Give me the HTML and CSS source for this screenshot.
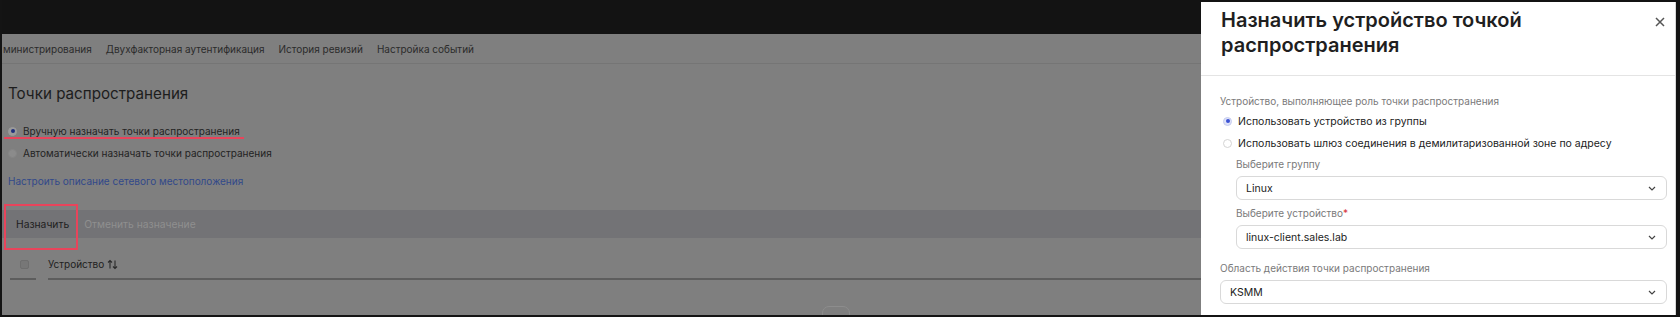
FILE: index.html
```html
<!DOCTYPE html>
<html lang="ru">
<head>
<meta charset="utf-8">
<title>Точки распространения</title>
<link rel="stylesheet" href="styles.css">
</head>
<body>
<div class="screen">
  <div class="app">
    <header class="topbar"></header>
    <nav class="tabs">
      <span class="tab">министрирования</span>
      <span class="tab">Двухфакторная аутентификация</span>
      <span class="tab">История ревизий</span>
      <span class="tab">Настройка событий</span>
    </nav>
    <main class="content">
      <h1 class="page-title">Точки распространения</h1>
      <div class="radio-group">
        <label class="radio marked"><span class="dot checked"></span>Вручную назначать точки распространения</label>
        <label class="radio"><span class="dot"></span>Автоматически назначать точки распространения</label>
      </div>
      <a class="link" href="#">Настроить описание сетевого местоположения</a>
      <div class="toolbar">
        <button class="tbtn boxed">Назначить</button>
        <button class="tbtn disabled">Отменить назначение</button>
      </div>
      <div class="thead">
        <div class="th th-check"><span class="checkbox"></span></div>
        <div class="th th-name">Устройство
          <svg class="sort" width="11" height="11" viewBox="0 0 11 11"><path d="M3 9.5V1.5M1 3.5l2-2 2 2M8 1.5v8M6 7.5l2 2 2-2" fill="none" stroke="#2a2a2a" stroke-width="1.1"/></svg>
        </div>
      </div>
      <div class="pager-stub"></div>
    </main>
  </div>

  <aside class="drawer">
    <div class="drawer-head">
      <h2 class="drawer-title">Назначить устройство точкой распространения</h2>
      <button class="close" aria-label="Закрыть">
        <svg width="10" height="10" viewBox="0 0 10 10"><path d="M1 1l8 8M9 1l-8 8" stroke="#555" stroke-width="1.5" fill="none"/></svg>
      </button>
    </div>
    <div class="drawer-body">
      <div class="field-label first">Устройство, выполняющее роль точки распространения</div>
      <label class="d-radio"><span class="d-dot checked"></span>Использовать устройство из группы</label>
      <label class="d-radio"><span class="d-dot"></span>Использовать шлюз соединения в демилитаризованной зоне по адресу</label>
      <div class="nested">
        <div class="field-label small-gap">Выберите группу</div>
        <div class="select"><span>Linux</span><svg class="chev" width="8" height="5" viewBox="0 0 8 5"><path d="M1 1l3 3 3-3" fill="none" stroke="#444" stroke-width="1.2"/></svg></div>
        <div class="field-label">Выберите устройство<span class="req">*</span></div>
        <div class="select"><span>linux-client.sales.lab</span><svg class="chev" width="8" height="5" viewBox="0 0 8 5"><path d="M1 1l3 3 3-3" fill="none" stroke="#444" stroke-width="1.2"/></svg></div>
      </div>
      <div class="field-label scope">Область действия точки распространения</div>
      <div class="select"><span>KSMM</span><svg class="chev" width="8" height="5" viewBox="0 0 8 5"><path d="M1 1l3 3 3-3" fill="none" stroke="#444" stroke-width="1.2"/></svg></div>
    </div>
  </aside>
</div>
</body>
</html>
```

FILE: styles.css
```css
* { box-sizing: border-box; }
html, body { margin: 0; padding: 0; }
body {
  background: #141414;
  font-family: Inter, "Noto Sans", sans-serif;
  width: 1680px;
  height: 317px;
  overflow: hidden;
}
.screen {
  position: relative;
  margin: 0 4px 0 2px;
  height: 315px;
  overflow: hidden;
  background: #7f7f7f;
}
.app { display: flex; flex-direction: column; height: 100%; }
.app > * { flex-shrink: 0; }
.topbar { height: 34px; background: #131313; }
.tabs {
  height: 30px;
  display: flex;
  align-items: center;
  gap: 14px;
  border-bottom: 1px solid #757575;
  font-size: 10px;
  color: #2b2b2b;
  padding: 1px 0 0 1px;
}
.content { padding-left: 6px; display: flex; flex-direction: column; align-items: flex-start; }
.page-title {
  margin: 18px 0 0;
  font-size: 15.2px;
  line-height: 24px;
  font-weight: 400;
  color: #1d1d1d;
}
.radio-group { margin-top: 14px; display: flex; flex-direction: column; }
.radio {
  position: relative;
  height: 22px;
  display: flex;
  align-items: center;
  gap: 6px;
  font-size: 10px;
  color: #232323;
}
.dot {
  width: 9px; height: 9px; border-radius: 50%;
  background: #8b8b8b;
  border: 1px solid #858585;
  position: relative;
}
.dot.checked { background: #9a9a9a; border-color: #9a9a9a; }
.dot.checked::after {
  content: ""; position: absolute; left: 1.5px; top: 1.5px;
  width: 4px; height: 4px; border-radius: 50%; background: #1f2f7c;
}
.radio.marked::after {
  content: ""; position: absolute; left: -4px; top: 17px;
  width: 240px; height: 2px; background: #e8445b;
}
.link {
  margin-top: 10px;
  font-size: 10px;
  line-height: 14px;
  color: #32498a;
  text-decoration: none;
}
.toolbar {
  margin: 22px 0 0 -6px;
  align-self: stretch;
  height: 28px;
  background: #737376;
  display: flex;
  align-items: center;
}
.tbtn {
  position: relative;
  font-family: inherit;
  font-size: 10.3px;
  background: none;
  border: 0;
  padding: 0 6px 0 14px;
  color: #1e1e1e;
  height: 28px;
}
.tbtn.disabled { color: #8f8f8f; padding-left: 9px; }
.tbtn.boxed::after {
  content: ""; position: absolute; left: 2px; top: -6px;
  width: 70px; height: 42px;
  border: 2px solid #e8445b;
}
.thead {
  display: flex;
  align-self: stretch;
  gap: 12px;
  height: 42px;
  padding-left: 2px;
}
.th {
  display: flex;
  align-items: center;
  padding-top: 12px;
  border-bottom: 2px solid #5d5d5d;
}
.th-check { width: 26px; justify-content: center; padding-left: 2px; }
.checkbox {
  width: 9px; height: 9px; border-radius: 2px;
  background: #777; border: 1px solid #6e6e6e;
}
.th-name { flex: 1; font-size: 10px; color: #1e1e1e; gap: 3px; }
.sort { display: block; }
.pager-stub {
  margin: 26px 0 0 814px;
  width: 28px; height: 18px;
  border: 1px solid #8d8d8d;
  border-radius: 7px 7px 0 0;
}

/* Drawer */
.drawer {
  position: absolute;
  top: 2px;
  left: 1199px;
  width: 475px;
  height: 313px;
  background: #fff;
  border-right: 1px solid #d8d8d8;
  display: flex;
  flex-direction: column;
}
.drawer-head {
  height: 74px;
  flex-shrink: 0;
  border-bottom: 1px solid #e4e4e4;
  display: flex;
  justify-content: space-between;
  align-items: flex-start;
  padding: 6px 10px 0 20px;
}
.drawer-title {
  margin: 0;
  font-size: 20px;
  line-height: 25px;
  font-weight: 600;
  color: #1f1f1f;
  width: 330px;
}
.close {
  border: 0; background: none; padding: 0;
  margin-top: 9px;
  width: 10px; height: 10px;
  display: flex;
}
.drawer-body {
  padding: 18px 8px 0 19px;
  display: flex;
  flex-direction: column;
}
.field-label {
  font-size: 10px;
  line-height: 14px;
  color: #7a7a7a;
  margin-bottom: 5px;
}
.field-label.first { margin-bottom: 2px; }
.field-label.small-gap { margin-top: 3px; }
.req { color: #d6333a; }
.d-radio {
  height: 22px;
  display: flex;
  align-items: center;
  gap: 6px;
  padding-left: 3px;
  font-size: 10.5px;
  color: #222;
}
.d-dot {
  width: 9px; height: 9px; border-radius: 50%;
  border: 1px solid #d4d4d4;
  background: #fff;
  position: relative;
}
.d-dot.checked { border-color: #c6ccef; background: #dfe3f8; }
.d-dot.checked::after {
  content: ""; position: absolute; left: 1.5px; top: 1.5px;
  width: 4px; height: 4px; border-radius: 50%; background: #3b52d4;
}
.nested { padding-left: 16px; display: flex; flex-direction: column; }
.select {
  height: 24px;
  flex-shrink: 0;
  border: 1px solid #d9d9d9;
  border-radius: 6px;
  display: flex;
  align-items: center;
  justify-content: space-between;
  padding: 0 10px 0 9px;
  font-size: 10.5px;
  color: #222;
  margin-bottom: 6px;
}
.select:first-of-type { margin-top: 1px; }
.chev { display: block; }
.field-label.scope { margin-top: 6px; }
```
